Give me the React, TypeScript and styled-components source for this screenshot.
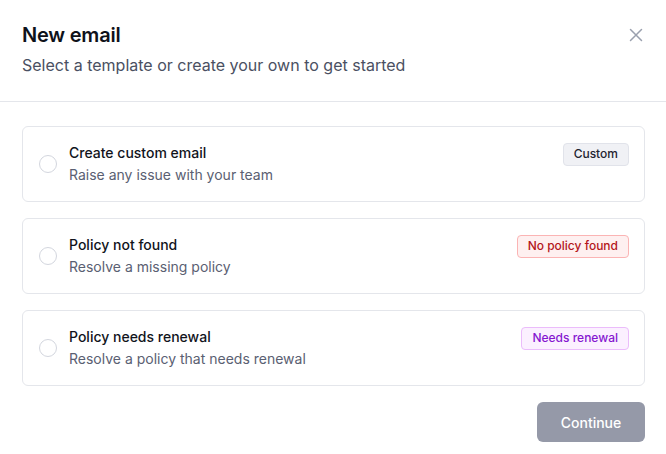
import React, { useState } from 'react';
import styled, { createGlobalStyle } from 'styled-components';

type Tone = 'gray' | 'red' | 'purple';

interface Template {
  id: string;
  title: string;
  description: string;
  badge: string;
  tone: Tone;
}

const templates: Template[] = [
  { id: 'custom', title: 'Create custom email', description: 'Raise any issue with your team', badge: 'Custom', tone: 'gray' },
  { id: 'missing', title: 'Policy not found', description: 'Resolve a missing policy', badge: 'No policy found', tone: 'red' },
  { id: 'renewal', title: 'Policy needs renewal', description: 'Resolve a policy that needs renewal', badge: 'Needs renewal', tone: 'purple' },
];

const tones: Record<Tone, { bg: string; border: string; color: string }> = {
  gray: { bg: '#f0f1f5', border: '#e1e3ea', color: '#1f2430' },
  red: { bg: '#fef0f0', border: '#fbb4b4', color: '#b4161b' },
  purple: { bg: '#fbf0ff', border: '#ebbcfb', color: '#8616d0' },
};

const GlobalStyle = createGlobalStyle`
  body {
    margin: 0;
    background: #ffffff;
    font-family: Inter, "Noto Sans", sans-serif;
  }
`;

export default function App() {
  const [selected, setSelected] = useState<string | null>(null);

  return (
    <>
      <GlobalStyle />
      <Dialog>
        <Header>
          <Title>New email</Title>
          <Subtitle>Select a template or create your own to get started</Subtitle>
          <CloseButton aria-label="Close">
            <svg width="14" height="14" viewBox="0 0 14 14" fill="none">
              <path d="M1.5 1.5l11 11M12.5 1.5l-11 11" stroke="#9aa0ae" strokeWidth="1.5" strokeLinecap="round" />
            </svg>
          </CloseButton>
        </Header>
        <Body>
          <List>
            {templates.map((t) => (
              <Card key={t.id} onClick={() => setSelected(t.id)}>
                <Radio $checked={selected === t.id} />
                <CardText>
                  <CardTitle>{t.title}</CardTitle>
                  <CardDescription>{t.description}</CardDescription>
                </CardText>
                <Badge $tone={t.tone}>{t.badge}</Badge>
              </Card>
            ))}
          </List>
          <Footer>
            <ContinueButton disabled={!selected}>Continue</ContinueButton>
          </Footer>
        </Body>
      </Dialog>
    </>
  );
}

const Dialog = styled.div`
  width: 666px;
  height: 454px;
  background: #ffffff;
  box-sizing: border-box;
`;

const Header = styled.div`
  position: relative;
  padding: 21px 22px 23px;
  border-bottom: 1px solid #e4e6eb;
`;

const Title = styled.h2`
  margin: 0;
  font-size: 20px;
  line-height: 28px;
  font-weight: 600;
  color: #0f121a;
  letter-spacing: -0.2px;
`;

const Subtitle = styled.p`
  margin: 4px 0 1px;
  font-size: 16px;
  line-height: 24px;
  color: #4a5062;
`;

const CloseButton = styled.button`
  position: absolute;
  top: 27px;
  right: 22px;
  width: 16px;
  height: 16px;
  padding: 0;
  border: none;
  background: none;
  display: flex;
  align-items: center;
  justify-content: center;
  cursor: pointer;
`;

const Body = styled.div`
  padding: 24px 21px 12px 22px;
`;

const List = styled.div`
  display: flex;
  flex-direction: column;
  gap: 16px;
`;

const Card = styled.div`
  display: flex;
  align-items: center;
  gap: 12px;
  padding: 16px 15px 16px 16px;
  border: 1px solid #e4e6eb;
  border-radius: 6px;
  cursor: pointer;
`;

const Radio = styled.span<{ $checked: boolean }>`
  flex: none;
  width: 18px;
  height: 18px;
  box-sizing: border-box;
  border-radius: 50%;
  border: ${(p) => (p.$checked ? '5px solid #4f46e5' : '1px solid #d3d6de')};
  background: #ffffff;
`;

const CardText = styled.div`
  flex: 1;
  display: flex;
  flex-direction: column;
  gap: 2px;
`;

const CardTitle = styled.div`
  font-size: 14px;
  line-height: 20px;
  font-weight: 500;
  color: #11141c;
`;

const CardDescription = styled.div`
  font-size: 14px;
  line-height: 20px;
  color: #5a6072;
`;

const Badge = styled.span<{ $tone: Tone }>`
  align-self: flex-start;
  padding: 1px 10px 2px;
  border-radius: 4px;
  font-size: 12px;
  line-height: 18px;
  font-weight: 500;
  background: ${(p) => tones[p.$tone].bg};
  border: 1px solid ${(p) => tones[p.$tone].border};
  color: ${(p) => tones[p.$tone].color};
`;

const Footer = styled.div`
  display: flex;
  justify-content: flex-end;
  margin-top: 16px;
`;

const ContinueButton = styled.button`
  width: 108px;
  height: 40px;
  border: none;
  border-radius: 6px;
  background: #4f46e5;
  color: #ffffff;
  font-family: inherit;
  font-size: 14px;
  font-weight: 500;
  cursor: pointer;

  &:disabled {
    background: #9599a8;
    cursor: default;
  }
`;
